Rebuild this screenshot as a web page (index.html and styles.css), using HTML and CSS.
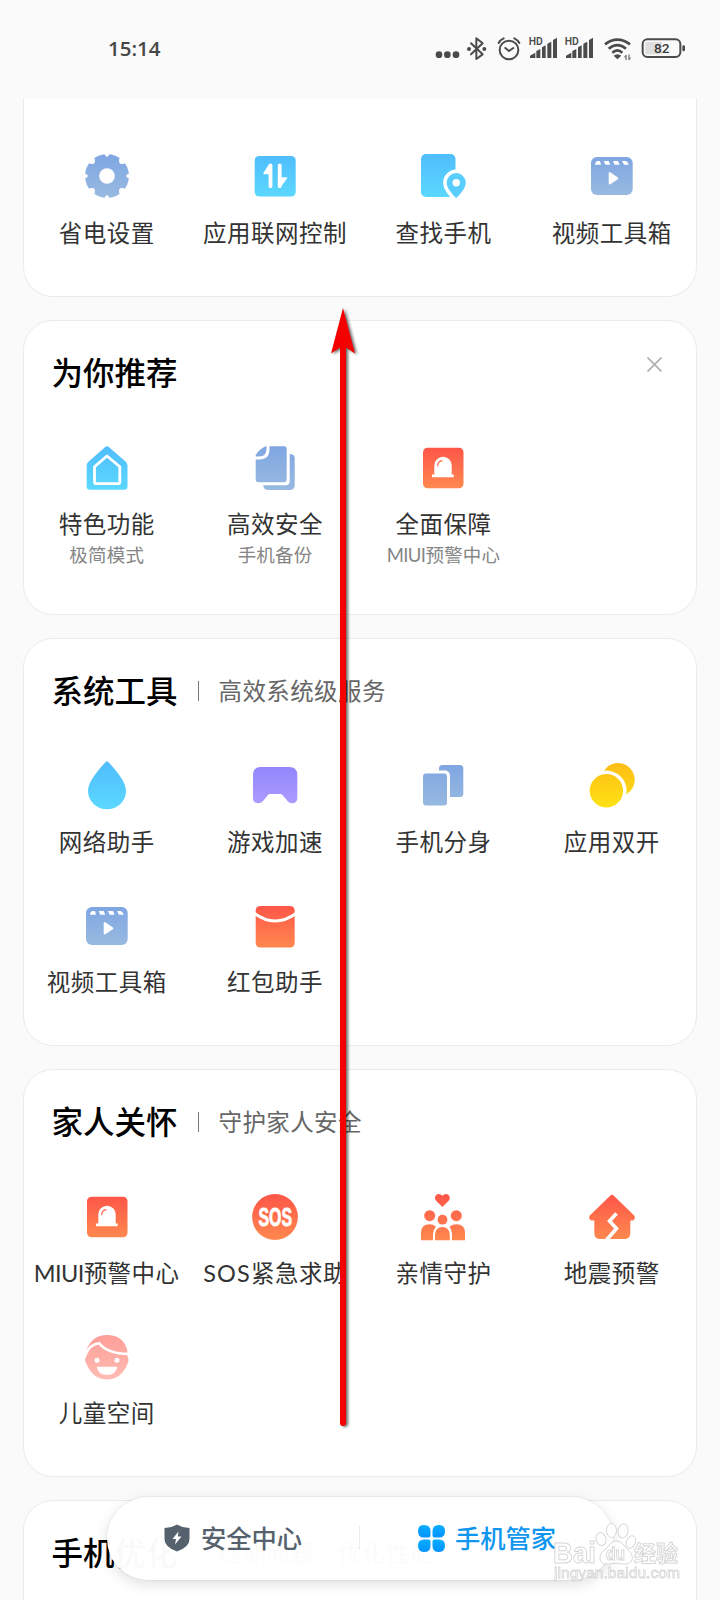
FILE: index.html
```html
<!DOCTYPE html>
<html lang="zh-CN">
<head>
    <meta charset="UTF-8">
    <meta name="viewport" content="width=device-width, initial-scale=1.0">
    <title>手机管家</title>
    <link rel="stylesheet" href="styles.css">
</head>
<body>
    <!-- Shared gradients and repeated icons -->
    <svg class="defs" width="0" height="0">
        <defs>
            <linearGradient id="blue" x1="0" y1="0" x2="0" y2="1"><stop offset="0" stop-color="#50bdfd"/><stop offset="1" stop-color="#5bd8ff"/></linearGradient>
            <linearGradient id="steel" x1="0" y1="0" x2="0" y2="1"><stop offset="0" stop-color="#7fa6e2"/><stop offset="1" stop-color="#98bae0"/></linearGradient>
            <linearGradient id="red" x1="0" y1="0" x2="0" y2="1"><stop offset="0" stop-color="#fe5648"/><stop offset="1" stop-color="#ff884f"/></linearGradient>
            <linearGradient id="redBox" gradientUnits="userSpaceOnUse" x1="0" y1="2" x2="0" y2="47"><stop offset="0" stop-color="#fe5648"/><stop offset="1" stop-color="#ff884f"/></linearGradient>
            <linearGradient id="steelBox" gradientUnits="userSpaceOnUse" x1="0" y1="2" x2="0" y2="46"><stop offset="0" stop-color="#7fa6e2"/><stop offset="1" stop-color="#98bae0"/></linearGradient>
            <linearGradient id="yellowBox" gradientUnits="userSpaceOnUse" x1="0" y1="1" x2="0" y2="46"><stop offset="0" stop-color="#fdbd15"/><stop offset="1" stop-color="#fde314"/></linearGradient>
            <linearGradient id="purple" x1="0" y1="0" x2="0" y2="1"><stop offset="0" stop-color="#9186fb"/><stop offset="1" stop-color="#ad9bff"/></linearGradient>
            <linearGradient id="pink" x1="0" y1="0" x2="0" y2="1"><stop offset="0" stop-color="#fd9e97"/><stop offset="1" stop-color="#ffbcb3"/></linearGradient>
            <linearGradient id="tab" x1="0" y1="0" x2="0" y2="1"><stop offset="0" stop-color="#07adff"/><stop offset="1" stop-color="#0593ff"/></linearGradient>
            <symbol id="video" viewBox="0 0 48 48">
                <rect x="3" y="5" width="41.7" height="38" rx="6" fill="url(#steel)"/>
                <path d="M7 12.7Q7.3 9.2 10 9H12l1 3.7zM15.7 9h5l1.6 3.7h-5zM25 9h5l1.6 3.7h-5zM34 9h3.500Q40 9.5 40.7 12.7H36z" fill="#fff"/>
                <path d="M21.7 21v10.500l7.6-5.200z" fill="#fff" stroke="#fff" stroke-width="2" stroke-linejoin="round"/>
            </symbol>
            <symbol id="alarm" viewBox="0 0 48 48">
                <rect x="4" y="3.7" width="40.5" height="40.5" rx="4.5" fill="url(#red)"/>
                <path d="M15.3 30.5V21.500a8.7 8.7 0 0 1 17.400 0v9h2v2.800H13v-2.800z" fill="#fff"/>
                <path d="M18.700 21.500Q19.200 17.300 23 16.700" fill="none" stroke="#fe6a4b" stroke-width="1.3" stroke-linecap="round"/>
            </symbol>
        </defs>
    </svg>

    <header class="status-bar">
        <span class="time">15:14</span>
        <svg class="status-icons" width="280" height="60" viewBox="0 0 840 180">
            <g fill="#4b4b4b">
                <circle cx="57" cy="104" r="10"/><circle cx="82" cy="104" r="10"/><circle cx="108" cy="104" r="10"/>
                <circle cx="147" cy="87" r="6"/><circle cx="193" cy="87" r="6"/>
                <path d="M330 114V107L346 98V114zM349 93L361 87V114H349zM366 82L377 76V114H366zM382 71L394 65V114H382zM399 60L411 53V114H399z"/>
                <path d="M438 114V107L454 98V114zM457 93L469 87V114H457zM474 82L485 76V114H474zM490 71L502 65V114H490zM507 60L519 53V114H507z"/>
                <path d="M581 107Q592 98 604 107L592 118z"/>
                <text x="326" y="75" class="hd">HD</text>
                <text x="434" y="75" class="hd">HD</text>
            </g>
            <g fill="none" stroke="#4b4b4b" stroke-width="6" stroke-linejoin="round" stroke-linecap="round">
                <path d="M153 70L188 103L169 117V55L188 70L153 103"/>
                <circle cx="267" cy="90" r="28"/><path d="M256 84L267 93L280 84M236 69Q240 60 251 55M283 55Q293 60 298 69"/>
                <path d="M555 73Q592 45 630 73M566 86Q592 65 618 86M577 98Q592 84 607 98" stroke-width="8" stroke-linecap="butt"/>
                <path d="M618 119V106L614 111M627 105V119L631 114" stroke-width="3"/>
            </g>
            <rect x="676" y="66" width="50" height="37" fill="#dedede"/>
            <rect x="668" y="58" width="113" height="53" rx="14" fill="none" stroke="#4b4b4b" stroke-width="6"/>
            <rect x="787" y="76" width="8" height="18" rx="4" fill="#4b4b4b"/>
            <text x="725" y="100" class="battery">82</text>
        </svg>
    </header>

    <main>
        <section class="card card-top">
            <div class="grid">
                <div class="item">
                    <svg class="icon" viewBox="0 0 48 48">
                        <circle cx="24" cy="24" r="22" fill="url(#steel)"/>
                        <g fill="#fff">
                            <path id="notch" d="M20.8 0L22.3 3.5Q24 6 25.7 3.500L27.2 0z"/>
                            <use href="#notch" transform="rotate(90 24 24)"/>
                            <use href="#notch" transform="rotate(180 24 24)"/>
                            <use href="#notch" transform="rotate(270 24 24)"/>
                            <path id="step" d="M19.500 0L20.8 3.500Q24 8.500 27.2 3.500L28.500 0z" transform="rotate(45 24 24)"/>
                            <use href="#step" transform="rotate(90 24 24)"/>
                            <use href="#step" transform="rotate(180 24 24)"/>
                            <use href="#step" transform="rotate(270 24 24)"/>
                            <circle cx="24" cy="24" r="7.8"/>
                        </g>
                    </svg>
                    <span class="label">省电设置</span>
                </div>
                <div class="item">
                    <svg class="icon" viewBox="0 0 48 48">
                        <rect x="3.7" y="4" width="41" height="40.5" rx="4.5" fill="url(#blue)"/>
                        <path d="M19.5 13.500V34.200M28.700 13.500V34.200" stroke="#fff" stroke-width="3.8" stroke-linecap="round"/>
                        <path d="M18.500 13L13 21.500h6zM29.500 34L35.500 26h-7z" fill="#fff" stroke="#fff" stroke-width="1.5" stroke-linejoin="round"/>
                    </svg>
                    <span class="label">应用联网控制</span>
                </div>
                <div class="item">
                    <svg class="icon" viewBox="0 0 48 48">
                        <rect x="2" y="2" width="34.5" height="43" rx="5" fill="url(#blue)"/>
                        <path d="M37.2 46C34 43 27.6 36 27.6 30.700a9.6 9.6 0 0 1 19.200 0C46.8 36 40.5 43 37.2 46z" fill="#fff" stroke="#fff" stroke-width="7"/>
                        <path d="M37.2 46C34 43 27.6 36 27.6 30.700a9.6 9.6 0 0 1 19.200 0C46.8 36 40.5 43 37.2 46z" fill="#58cdfe"/>
                        <circle cx="37.2" cy="30.7" r="3.7" fill="#fff"/>
                    </svg>
                    <span class="label">查找手机</span>
                </div>
                <div class="item">
                    <svg class="icon"><use href="#video"/></svg>
                    <span class="label">视频工具箱</span>
                </div>
            </div>
        </section>

        <section class="card">
            <div class="card-head">
                <h2>为你推荐</h2>
                <svg class="close" viewBox="0 0 16 16"><path d="M.5 .5L15.5 15.500M15.500 .5L.5 15.500" stroke="#b0b0b0" stroke-width="1.8"/></svg>
            </div>
            <div class="grid">
                <div class="item">
                    <svg class="icon" viewBox="0 0 48 48">
                        <path d="M22 3.200Q24 1.500 26 3.200L42.500 17.500Q44.500 19.300 44.500 21.500V42.500Q44.500 45.700 41.300 45.700H6.900Q3.700 45.700 3.700 42.500V21.500Q3.700 19.300 5.700 17.500z" fill="url(#blue)"/>
                        <path d="M24 12L36.800 22.800V38Q36.800 39.700 35 39.700H13.300Q11.500 39.700 11.500 38V22.800z" fill="none" stroke="#fff" stroke-width="2.8" stroke-linejoin="round"/>
                    </svg>
                    <span class="label">特色功能</span>
                    <span class="sub">极简模式</span>
                </div>
                <div class="item">
                    <svg class="icon" viewBox="0 0 48 48">
                        <rect x="12.3" y="10" width="31.4" height="36" rx="4.5" fill="url(#steelBox)"/>
                        <rect x="3.2" y=".8" width="35.5" height="40.500" rx="4" fill="#fff"/>
                        <path d="M14.500 2.300H33Q35.700 2.300 35.700 5V35.600Q35.700 38.300 33 38.300H7.400Q4.700 38.300 4.700 35.600V11Q8 5.500 14.500 2.300z" fill="url(#steelBox)"/>
                        <path d="M17 1V5Q17 14 8 14H3.500" fill="none" stroke="#fff" stroke-width="3"/>
                    </svg>
                    <span class="label">高效安全</span>
                    <span class="sub">手机备份</span>
                </div>
                <div class="item">
                    <svg class="icon"><use href="#alarm"/></svg>
                    <span class="label">全面保障</span>
                    <span class="sub"><span class="latin">MIUI</span>预警中心</span>
                </div>
            </div>
        </section>

        <section class="card">
            <div class="card-head">
                <h2>系统工具</h2>
                <p>高效系统级服务</p>
            </div>
            <div class="grid">
                <div class="item">
                    <svg class="icon" viewBox="0 0 48 48"><path d="M22.7 0Q24-1.600 25.300 0C34 9.500 43 20 43 29a19 18.300 0 0 1-38 0C5 20 14 9.500 22.700 0z" fill="url(#blue)"/></svg>
                    <span class="label">网络助手</span>
                </div>
                <div class="item">
                    <svg class="icon" viewBox="0 0 48 48"><path d="M10 5H38.300Q46.300 5 46.300 13V36Q46.300 41.300 41 41.300Q38 41.300 36.500 39L31.500 33Q30.700 32 29.500 32H19Q17.800 32 17 33L12 39Q10.300 41.300 7.300 41.300Q2 41.300 2 36V13Q2 5 10 5z" fill="url(#purple)"/></svg>
                    <span class="label">游戏加速</span>
                </div>
                <div class="item">
                    <svg class="icon" viewBox="0 0 48 48">
                        <rect x="20" y="3" width="24.3" height="32" rx="3.5" fill="url(#steelBox)"/>
                        <rect x="1" y="8.5" width="30" height="38" rx="5" fill="#fff"/>
                        <rect x="4" y="11.5" width="24" height="32" rx="3" fill="url(#steelBox)"/>
                    </svg>
                    <span class="label">手机分身</span>
                </div>
                <div class="item">
                    <svg class="icon" viewBox="0 0 48 48">
                        <circle cx="30" cy="17.8" r="16.7" fill="url(#yellowBox)"/>
                        <circle cx="18.4" cy="28.8" r="20.2" fill="#fff"/>
                        <circle cx="18.4" cy="28.8" r="16.7" fill="url(#yellowBox)"/>
                    </svg>
                    <span class="label">应用双开</span>
                </div>
                <div class="item">
                    <svg class="icon"><use href="#video"/></svg>
                    <span class="label">视频工具箱</span>
                </div>
                <div class="item">
                    <svg class="icon" viewBox="0 0 48 48">
                        <rect x="4.7" y="4" width="39" height="41.5" rx="4.5" fill="url(#red)"/>
                        <path d="M3.500 11.500Q24 26.500 45 11.500" fill="none" stroke="#fff" stroke-width="3"/>
                    </svg>
                    <span class="label">红包助手</span>
                </div>
            </div>
        </section>

        <section class="card">
            <div class="card-head">
                <h2>家人关怀</h2>
                <p>守护家人安全</p>
            </div>
            <div class="grid">
                <div class="item">
                    <svg class="icon"><use href="#alarm"/></svg>
                    <span class="label"><span class="latin">MIUI</span>预警中心</span>
                </div>
                <div class="item">
                    <svg class="icon" viewBox="0 0 48 48">
                        <circle cx="24" cy="24" r="22.9" fill="url(#red)"/>
                        <text x="7.5" y="33" class="sos" textLength="33.5" lengthAdjust="spacingAndGlyphs">SOS</text>
                    </svg>
                    <span class="label"><span class="wide">SOS</span>紧急求助</span>
                </div>
                <div class="item">
                    <svg class="icon" viewBox="0 0 48 48">
                        <g fill="url(#redBox)">
                            <path d="M23.400 14L17.300 8C14.500 5 16.500 1 19.700 1Q22 1 23.400 2.800Q24.800 1 27.100 1C30.300 1 32.300 5 29.500 8z"/>
                            <circle cx="10.7" cy="22.7" r="5.5"/><circle cx="37.3" cy="22.7" r="5.5"/><circle cx="23.5" cy="26.7" r="4.9"/>
                            <path d="M2 47.300V39.300Q2.500 31.300 10.500 31.300Q14.500 31.300 17 33.700Q14 37 14 41V47.300zM46 47.300V39.300Q45.500 31.300 37.500 31.300Q33.500 31.300 30.500 33.700Q33 37 33 41V47.300zM16 47.300V41.500Q16.500 34 23.400 34Q30.300 34 30.800 41.500V47.300z"/>
                        </g>
                    </svg>
                    <span class="label">亲情守护</span>
                </div>
                <div class="item">
                    <svg class="icon" viewBox="0 0 48 48">
                        <path d="M22.200 2.700Q24 1 25.800 2.700L46.200 22.500Q48 25.500 45 27.500H42.300V40Q42.300 46 36.300 46H12.300Q6.300 46 6.300 40V27.500H3.200Q0 25.500 1.800 22.500z" fill="url(#red)"/>
                        <path d="M28.500 20.500L21.500 28L28.500 35.500L18.500 47" fill="none" stroke="#fff" stroke-width="3.6"/>
                    </svg>
                    <span class="label">地震预警</span>
                </div>
                <div class="item">
                    <svg class="icon" viewBox="0 0 48 48">
                        <path d="M24 2Q40 2 44.300 17V23Q46.500 27 44.500 31Q38 46.500 24 46.500Q10 46.500 3.500 31Q.8 27 3.500 23V17Q9 2 24 2z" fill="url(#pink)"/>
                        <path d="M2 22.500Q7 11 16.300 10.300Q24 20.800 46 21" fill="none" stroke="#fff" stroke-width="2.6"/>
                        <circle cx="14" cy="27.3" r="2.5" fill="#fff"/><circle cx="34" cy="27.3" r="2.5" fill="#fff"/>
                        <path d="M13.700 33.700H34.300Q33 42 24 42Q15 42 13.700 33.700z" fill="#fff"/>
                    </svg>
                    <span class="label">儿童空间</span>
                </div>
            </div>
        </section>

        <section class="card card-last">
            <div class="card-head">
                <h2>手机优化</h2>
                <p>检测问题，优化性能</p>
            </div>
        </section>
    </main>

    <nav class="tab-bar">
        <a class="tab">
            <svg width="26" height="28" viewBox="0 0 26 28">
                <path d="M13 .5Q18 3.500 25.500 4V15Q25.500 23 13 27.500Q.5 23 .5 15V4Q8 3.500 13 .5z" fill="#55616c"/>
                <path d="M14.500 7.500L8.500 15H12L11 20.500L17.500 12.500H13.800z" fill="#fff"/>
            </svg>
            安全中心
        </a>
        <a class="tab active">
            <svg width="27" height="27" viewBox="0 0 27 27" fill="url(#tab)">
                <path d="M6 0Q12.500 0 12.500 6V10.500Q12.500 12.500 10.500 12.500H6Q0 12.500 0 6.200T6 0z"/>
                <path d="M21 0Q14.500 0 14.500 6V10.500Q14.500 12.500 16.500 12.500H21Q27 12.500 27 6.200T21 0z"/>
                <path d="M6 27Q12.500 27 12.500 21V16.500Q12.500 14.500 10.500 14.500H6Q0 14.500 0 20.800T6 27z"/>
                <path d="M21 27Q14.500 27 14.500 21V16.500Q14.500 14.500 16.500 14.500H21Q27 14.500 27 20.800T21 27z"/>
            </svg>
            手机管家
        </a>
    </nav>

    <!-- Swipe-up arrow over the page -->
    <svg class="arrow" width="40" height="1124" viewBox="0 0 40 1124">
        <path d="M20 0L32 45.500L23 39.500V1115Q23 1118 20 1118T17 1115V39.500L8 45.500z" fill="#f40000"/>
    </svg>

    <svg class="watermark" width="132" height="66" viewBox="0 0 132 66">
        <g fill="#fff" stroke="#d0d0d0" stroke-width="1">
            <ellipse cx="49" cy="21" rx="5" ry="6.5" transform="rotate(-15 49 21)"/>
            <ellipse cx="59.5" cy="12.5" rx="5" ry="7"/>
            <ellipse cx="71" cy="13" rx="5" ry="7" transform="rotate(10 71 13)"/>
            <ellipse cx="79" cy="24" rx="4.5" ry="6.5" transform="rotate(20 79 24)"/>
            <path d="M64 23Q70 23 74 30Q82 36 80 42Q78 47 71 46Q64 44.500 57 46Q49 47 48 41Q47 35 55 30Q59 23 64 23z"/>
            <text x="1" y="45" class="wm-logo" textLength="43" lengthAdjust="spacingAndGlyphs">Bai</text>
            <text x="54" y="42" class="wm-du" textLength="19" lengthAdjust="spacingAndGlyphs">du</text>
            <text x="82" y="43" class="wm-cn">经验</text>
            <text x="2" y="60" class="wm-url" textLength="126" lengthAdjust="spacingAndGlyphs">jingyan.baidu.com</text>
        </g>
    </svg>
</body>
</html>
```

FILE: styles.css
```css
* {
    box-sizing: border-box;
    margin: 0;
    padding: 0;
}

body {
    position: relative;
    width: 720px;
    height: 1600px;
    overflow: hidden;
    background: #fafafa;
    color: #333;
    font-family: Lato, "Noto Sans CJK SC", sans-serif;
}

.defs {
    position: absolute;
}

.status-bar {
    display: flex;
    justify-content: space-between;
    align-items: flex-start;
    height: 98px;
    padding: 20px 20px 0 108px;
}

.time {
    font-family: "Open Sans", sans-serif;
    font-size: 20.5px;
    font-weight: 600;
    line-height: 57px;
    color: #484848;
}

.hd {
    font: 600 31px Roboto, sans-serif;
}

.battery {
    font: 500 41px Roboto, sans-serif;
    fill: #3a3a3a;
    text-anchor: middle;
}

main {
    display: flex;
    flex-direction: column;
    gap: 23px;
    width: 674px;
    margin-left: 23px;
}

.card {
    padding-bottom: 44.5px;
    background: #fff;
    border: 1px solid #ebebeb;
    border-radius: 30px;
}

.card-top {
    height: 198.5px;
    padding-top: 54px;
    border-top: none;
    border-radius: 0 0 30px 30px;
}

.card-head {
    display: flex;
    align-items: center;
    height: 123px;
    padding: 0 34px 18px 27.5px;
}

.card-head h2 {
    font-size: 31.5px;
    font-weight: 500;
    line-height: 40px;
    color: #000;
}

.card-head p {
    display: flex;
    align-items: center;
    font-size: 23.5px;
    letter-spacing: 0.4px;
    line-height: 36px;
    color: #666;
}

.card-head p::before {
    content: "";
    width: 1px;
    height: 20px;
    margin: 0 20px;
    background: #777;
}

.close {
    width: 15px;
    height: 15px;
    margin: 0 0 17px auto;
}

.grid {
    display: grid;
    grid-template-columns: repeat(4, 168.4px);
    row-gap: 41.5px;
    margin-left: -1.5px;
}

.item {
    display: flex;
    flex-direction: column;
    align-items: center;
}

.icon {
    width: 48px;
    height: 48px;
    margin-bottom: 14.5px;
    overflow: visible;
}

.label {
    font-size: 23.5px;
    letter-spacing: 0.5px;
    line-height: 36px;
    white-space: nowrap;
}

.sub {
    margin-bottom: 1px;
    font-size: 18.5px;
    letter-spacing: 0.2px;
    line-height: 26px;
    color: #858585;
    white-space: nowrap;
}

.latin {
    letter-spacing: -0.6px;
}

.wide {
    letter-spacing: 1.2px;
}

.sos {
    font: 700 25px "Liberation Sans", sans-serif;
    fill: #fff;
    stroke: #fff;
    stroke-width: 0.8px;
}

.card-last {
    height: 160px;
}

.tab-bar {
    position: absolute;
    left: 107px;
    top: 1496.5px;
    display: flex;
    align-items: center;
    width: 506px;
    height: 83px;
    background: rgba(255, 255, 255, 0.975);
    border-radius: 42px;
    box-shadow: 0 4px 14px rgba(0, 0, 0, 0.13), 0 0 2px rgba(0, 0, 0, 0.12);
}

.tab {
    display: flex;
    flex: 1;
    align-items: center;
    justify-content: center;
    gap: 11px;
    font-size: 25.3px;
    font-weight: 500;
    line-height: 36px;
    color: #55616c;
}

.tab.active {
    gap: 10px;
    padding-left: 1px;
    border-left: 1px solid #ececec;
    height: 24px;
    color: #1196ef;
}

.arrow {
    position: absolute;
    left: 323px;
    top: 308px;
    filter: drop-shadow(2px 1px 1.5px rgba(0, 0, 0, 0.6));
}

.watermark {
    position: absolute;
    left: 552px;
    top: 1518px;
    opacity: 0.85;
}

.wm-logo {
    font: 700 30px "Liberation Sans", sans-serif;
}

.wm-du {
    font: 700 18px "Liberation Sans", sans-serif;
}

.wm-cn {
    font: 700 22px "Noto Sans CJK SC", sans-serif;
}

.wm-url {
    font: 400 15px "Liberation Sans", sans-serif;
    stroke-width: 0.8px;
}
```
